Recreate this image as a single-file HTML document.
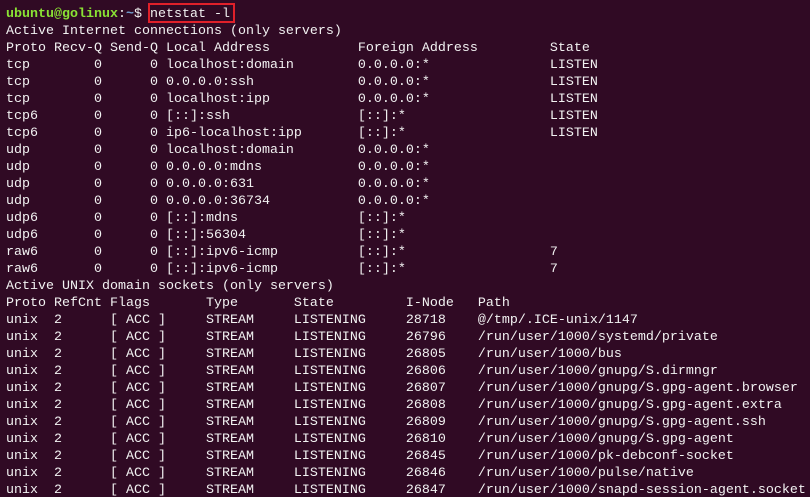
<!DOCTYPE html>
<html><head><meta charset="utf-8"><style>
html,body{margin:0;padding:0;background:#300a24;width:810px;height:497px;overflow:hidden}
pre{margin:0;padding:6px 0 0 6px;font-family:"Liberation Mono","DejaVu Sans Mono",monospace;font-size:13.33px;line-height:17px;color:#f2f2f2;white-space:pre;position:relative}
.u{color:#8ae234;font-weight:bold}.b{color:#729fcf;font-weight:bold}
.box{position:absolute;left:148px;top:3px;width:87px;height:20px;border:2px solid #e0202a;box-sizing:border-box}
</style></head><body><pre><span class="box"></span><span class="u">ubuntu@golinux</span>:<span class="b">~</span>$ netstat -l
Active Internet connections (only servers)
Proto Recv-Q Send-Q Local Address           Foreign Address         State      
tcp        0      0 localhost:domain        0.0.0.0:*               LISTEN     
tcp        0      0 0.0.0.0:ssh             0.0.0.0:*               LISTEN     
tcp        0      0 localhost:ipp           0.0.0.0:*               LISTEN     
tcp6       0      0 [::]:ssh                [::]:*                  LISTEN     
tcp6       0      0 ip6-localhost:ipp       [::]:*                  LISTEN     
udp        0      0 localhost:domain        0.0.0.0:*                          
udp        0      0 0.0.0.0:mdns            0.0.0.0:*                          
udp        0      0 0.0.0.0:631             0.0.0.0:*                          
udp        0      0 0.0.0.0:36734           0.0.0.0:*                          
udp6       0      0 [::]:mdns               [::]:*                             
udp6       0      0 [::]:56304              [::]:*                             
raw6       0      0 [::]:ipv6-icmp          [::]:*                  7          
raw6       0      0 [::]:ipv6-icmp          [::]:*                  7          
Active UNIX domain sockets (only servers)
Proto RefCnt Flags       Type       State         I-Node   Path
unix  2      [ ACC ]     STREAM     LISTENING     28718    @/tmp/.ICE-unix/1147
unix  2      [ ACC ]     STREAM     LISTENING     26796    /run/user/1000/systemd/private
unix  2      [ ACC ]     STREAM     LISTENING     26805    /run/user/1000/bus
unix  2      [ ACC ]     STREAM     LISTENING     26806    /run/user/1000/gnupg/S.dirmngr
unix  2      [ ACC ]     STREAM     LISTENING     26807    /run/user/1000/gnupg/S.gpg-agent.browser
unix  2      [ ACC ]     STREAM     LISTENING     26808    /run/user/1000/gnupg/S.gpg-agent.extra
unix  2      [ ACC ]     STREAM     LISTENING     26809    /run/user/1000/gnupg/S.gpg-agent.ssh
unix  2      [ ACC ]     STREAM     LISTENING     26810    /run/user/1000/gnupg/S.gpg-agent
unix  2      [ ACC ]     STREAM     LISTENING     26845    /run/user/1000/pk-debconf-socket
unix  2      [ ACC ]     STREAM     LISTENING     26846    /run/user/1000/pulse/native
unix  2      [ ACC ]     STREAM     LISTENING     26847    /run/user/1000/snapd-session-agent.socket</pre></body></html>
